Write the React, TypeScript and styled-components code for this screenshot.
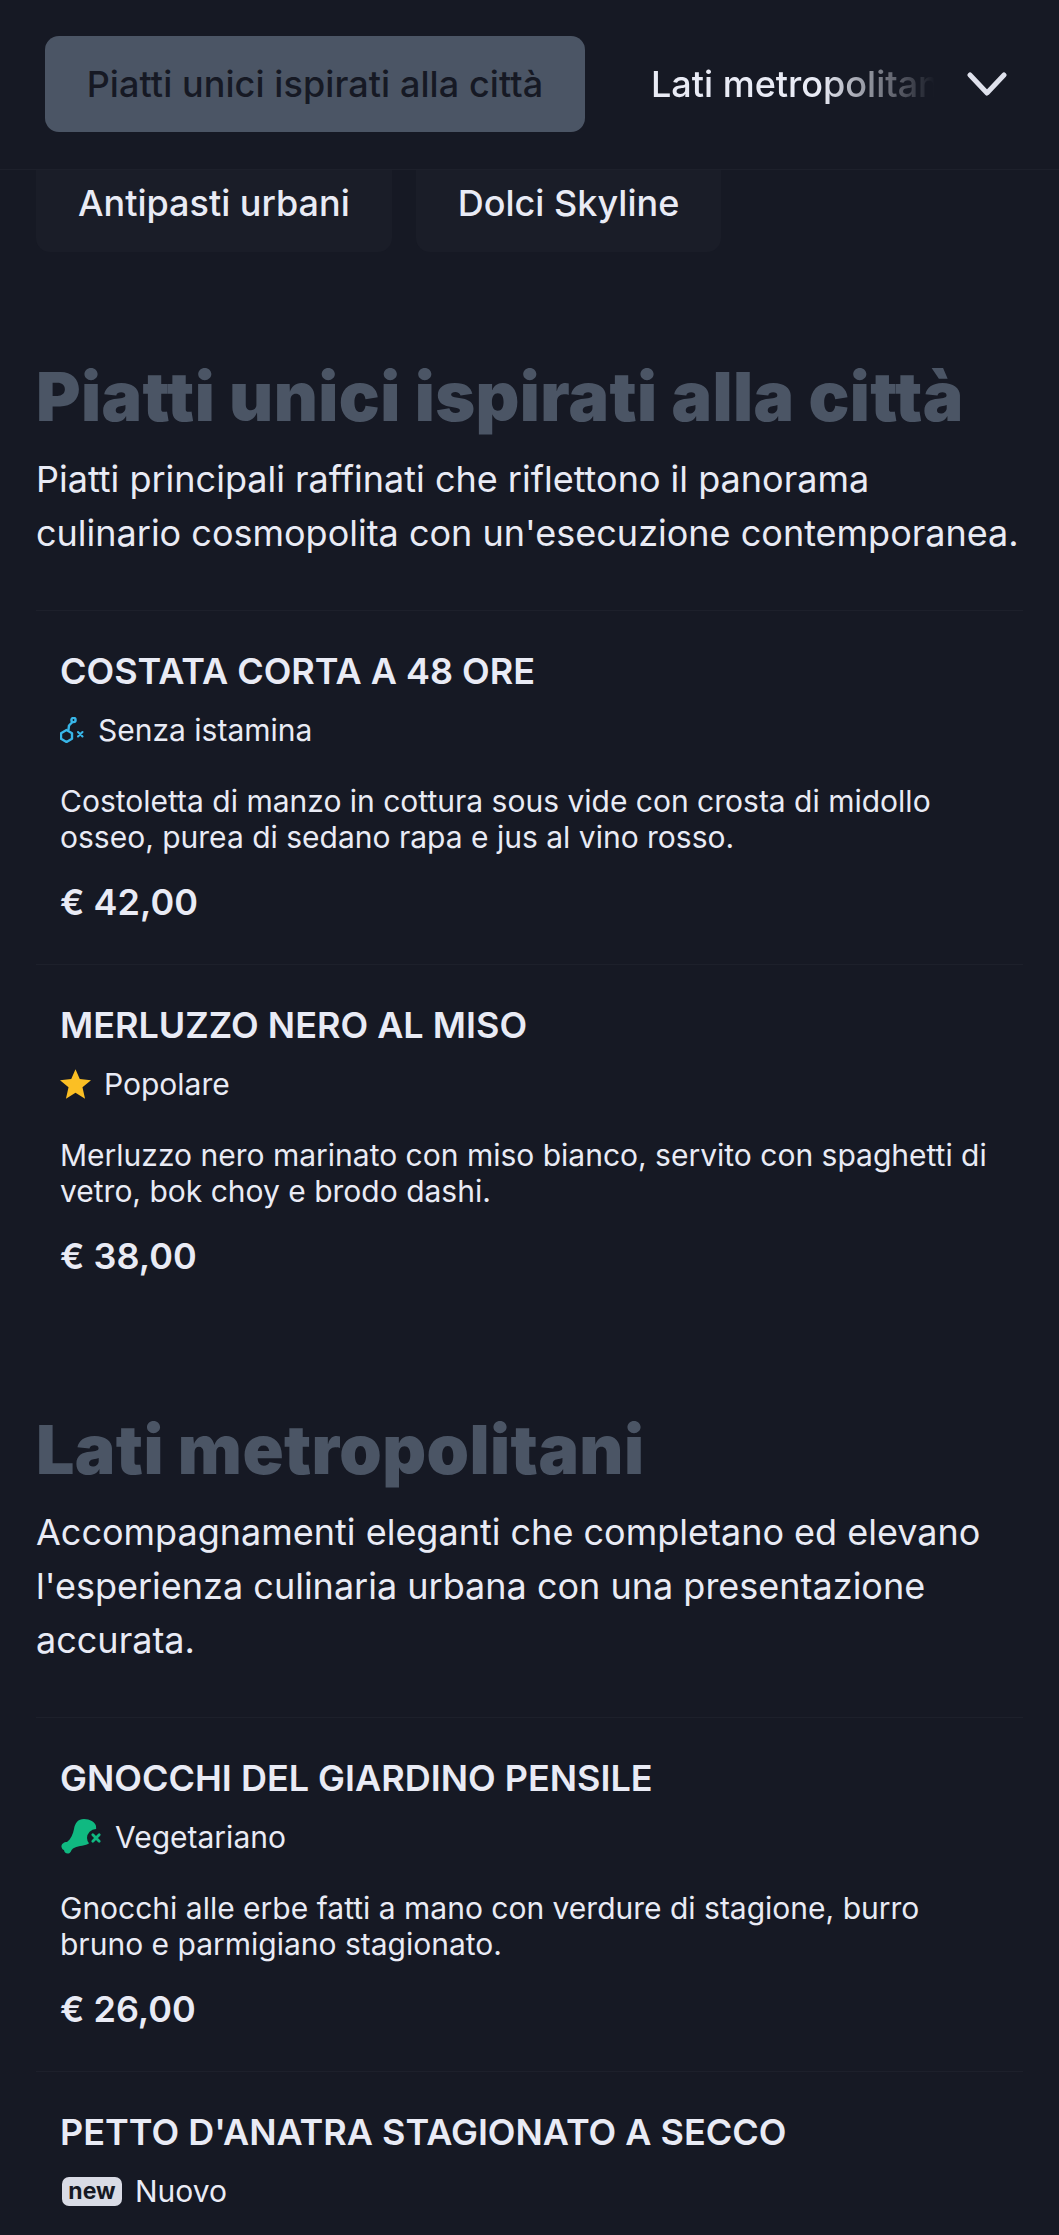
import React from "react";
import styled, { createGlobalStyle } from "styled-components";

type Tag = "histamine" | "star" | "vegetarian" | "new";

type Dish = {
    name: string;
    tag: Tag;
    tagLabel: string;
    description: string;
    price?: string;
}

type Section = {
    title: string;
    intro: string;
    dishes: Dish[];
}

const sections: Section[] = [
    {
        title: "Piatti unici ispirati alla città",
        intro: "Piatti principali raffinati che riflettono il panorama culinario cosmopolita con un'esecuzione contemporanea.",
        dishes: [
            {
                name: "COSTATA CORTA A 48 ORE",
                tag: "histamine",
                tagLabel: "Senza istamina",
                description: "Costoletta di manzo in cottura sous vide con crosta di midollo osseo, purea di sedano rapa e jus al vino rosso.",
                price: "€ 42,00",
            },
            {
                name: "MERLUZZO NERO AL MISO",
                tag: "star",
                tagLabel: "Popolare",
                description: "Merluzzo nero marinato con miso bianco, servito con spaghetti di vetro, bok choy e brodo dashi.",
                price: "€ 38,00",
            },
        ],
    },
    {
        title: "Lati metropolitani",
        intro: "Accompagnamenti eleganti che completano ed elevano l'esperienza culinaria urbana con una presentazione accurata.",
        dishes: [
            {
                name: "GNOCCHI DEL GIARDINO PENSILE",
                tag: "vegetarian",
                tagLabel: "Vegetariano",
                description: "Gnocchi alle erbe fatti a mano con verdure di stagione, burro bruno e parmigiano stagionato.",
                price: "€ 26,00",
            },
            {
                name: "PETTO D'ANATRA STAGIONATO A SECCO",
                tag: "new",
                tagLabel: "Nuovo",
                description: "",
            },
        ],
    },
];

const HistamineIcon = () => (
    <svg width="25" height="26" viewBox="0 0 25 26" fill="none" stroke="#38b6e8" strokeWidth="2.4" strokeLinecap="round" strokeLinejoin="round">
        <path d="M6.500 13 12 16.200V21.800L6.500 25 1 21.800V16.200Z"/>
        <path d="M8.500 12.500 9 8.500 12.500 5"/>
        <circle cx="13.500" cy="3" r="2.100"/>
        <path d="M18 15 22.500 19.500M22.500 15 18 19.500" strokeWidth="2.100"/>
    </svg>
)

const StarIcon = () => (
    <svg width="31" height="30" viewBox="0 0 24 23">
        <path fill="#fbbf24" d="M12 0 15.300 7.700 24 8.500 17.400 14.100 19.400 23 12 18.300 4.600 23 6.600 14.100 0 8.500 8.700 7.700Z"/>
    </svg>
)

const DrumstickIcon = () => (
    <svg width="42" height="36" viewBox="0 0 42 36">
        <path fill="#10b981" d="M24 0C18 0 15 4 14 10 13 15 11 20 7 23 4 23 1 25 1.500 28 2 30 3 31 4 31 4 33 6 35 8.500 34.500 11 34 11 31 13 29.500 17 27 23 27 28 25 33 22 37 14 36 7 35 3 30 0 24 0Z"/>
        <circle cx="36" cy="19" r="9" fill="#161924"/>
        <path d="M32.800 15.800 39.200 22.200M39.200 15.800 32.800 22.200" stroke="#10b981" strokeWidth="2.800" strokeLinecap="round"/>
    </svg>
)

const DishTag = ({tag}: { tag: Tag }) => {
    if (tag === "histamine") return <HistamineIcon/>;
    if (tag === "star") return <StarIcon/>;
    if (tag === "vegetarian") return <DrumstickIcon/>;
    return <NewBadge>new</NewBadge>;
}

const App = () => {
    return (
        <Page>
            <GlobalStyle/>
            <Header>
                <ActiveTab>Piatti unici ispirati alla città</ActiveTab>
                <Scroller>
                    <ScrollerLabel>Lati metropolitani</ScrollerLabel>
                </Scroller>
                <ChevronButton aria-label="Altre categorie">
                    <svg width="40" height="24" viewBox="0 0 40 24" fill="none" stroke="#dfe1ec" strokeWidth="5" strokeLinecap="round" strokeLinejoin="round">
                        <path d="M3 3 20 21 37 3"/>
                    </svg>
                </ChevronButton>
            </Header>
            <TabRow>
                <Tab>Antipasti urbani</Tab>
                <Tab>Dolci Skyline</Tab>
            </TabRow>
            {sections.map(section => (
                <MenuSection key={section.title}>
                    <SectionTitle>{section.title}</SectionTitle>
                    <SectionIntro>{section.intro}</SectionIntro>
                    {section.dishes.map(dish => (
                        <DishItem key={dish.name}>
                            <DishName>{dish.name}</DishName>
                            <TagRow>
                                <DishTag tag={dish.tag}/>
                                <span>{dish.tagLabel}</span>
                            </TagRow>
                            {dish.description && <DishDescription>{dish.description}</DishDescription>}
                            {dish.price && <DishPrice>{dish.price}</DishPrice>}
                        </DishItem>
                    ))}
                </MenuSection>
            ))}
        </Page>
    )
}

const GlobalStyle = createGlobalStyle`
  html, body {
    margin: 0;
    background-color: #161924;
  }
`

const Page = styled.div`
  width: 1059px;
  height: 2235px;
  overflow: hidden;
  background-color: #161924;
  color: #e9ebf5;
  font-family: "Inter", "Liberation Sans", sans-serif;
`

const Header = styled.header`
  position: relative;
  z-index: 2;
  height: 170px;
  box-sizing: border-box;
  display: flex;
  align-items: flex-start;
  padding: 36px 0 0 45px;
  background-color: #161924;
  border-bottom: 1px solid #1d202b;
`

const ActiveTab = styled.div`
  width: 540px;
  height: 96px;
  flex-shrink: 0;
  box-sizing: border-box;
  display: flex;
  align-items: center;
  justify-content: center;
  border-radius: 14px;
  background-color: #4b5565;
  color: #161924;
  font-size: 36px;
  font-weight: 500;
  letter-spacing: 0.08px;
  white-space: nowrap;
`

const Scroller = styled.div`
  width: 284px;
  height: 96px;
  margin-left: 66px;
  display: flex;
  align-items: center;
  overflow: hidden;
  -webkit-mask-image: linear-gradient(to right, #000 60%, transparent 100%);
  mask-image: linear-gradient(to right, #000 60%, transparent 100%);
`

const ScrollerLabel = styled.span`
  font-size: 36px;
  font-weight: 500;
  white-space: nowrap;
`

const ChevronButton = styled.div`
  height: 96px;
  margin-left: 32px;
  display: flex;
  align-items: center;
`

const TabRow = styled.nav`
  display: flex;
  gap: 24px;
  margin-top: -16px;
  padding: 0 36px;
`

const Tab = styled.div`
  height: 98px;
  box-sizing: border-box;
  display: flex;
  align-items: center;
  padding: 0 42px;
  border-radius: 14px;
  background-color: #1a1d28;
  font-size: 36px;
  font-weight: 500;
  white-space: nowrap;
`

const MenuSection = styled.section`
  padding: 0 36px;
  margin-top: 100px;

  & + & {
    margin-top: 87px;
  }
`

const SectionTitle = styled.h2`
  margin: 0;
  color: #4b5565;
  font-family: "Inter", "Liberation Sans", sans-serif;
  font-size: 68px;
  font-weight: 900;
  letter-spacing: 0.4px;
  line-height: 88px;
`

const SectionIntro = styled.p`
  margin: 12px 0 50px;
  font-size: 36px;
  line-height: 54px;
`

const DishItem = styled.article`
  height: 354px;
  box-sizing: border-box;
  padding: 33px 24px 0;
  border-top: 1px solid #1d202b;
`

const DishName = styled.h3`
  margin: 0;
  font-size: 36px;
  font-weight: 600;
  line-height: 54px;
`

const TagRow = styled.div`
  display: flex;
  align-items: center;
  gap: 13px;
  height: 40px;
  margin-top: 12px;
  font-size: 30px;
`

const NewBadge = styled.span`
  width: 60px;
  height: 29px;
  margin-left: 2px;
  display: flex;
  align-items: center;
  justify-content: center;
  border-radius: 7px;
  background-color: #d9dbe5;
  color: #161924;
  font-size: 23px;
  font-weight: 700;
`

const DishDescription = styled.p`
  margin: 33px 0 0;
  font-size: 30px;
  line-height: 36px;
`

const DishPrice = styled.div`
  margin-top: 20px;
  font-size: 36px;
  font-weight: 600;
  line-height: 54px;
`

export default App;
